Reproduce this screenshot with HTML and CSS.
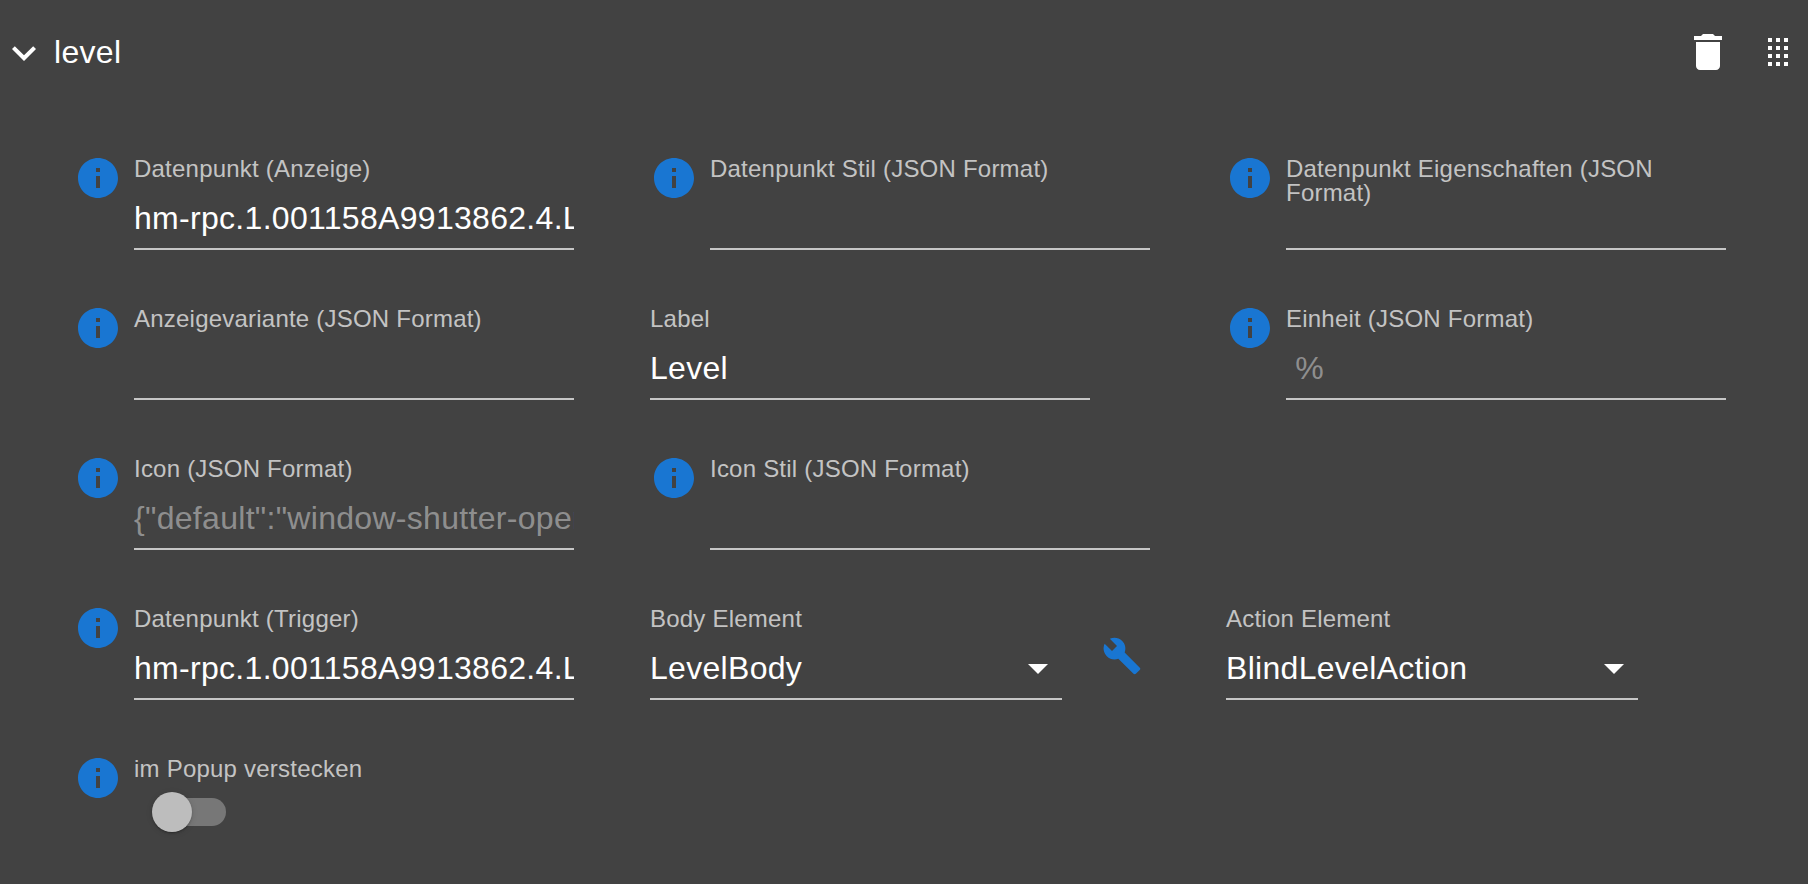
FILE: index.html
```html
<!DOCTYPE html>
<html lang="de">
<head>
  <meta charset="UTF-8">
  <meta name="viewport" content="width=device-width, initial-scale=1.0">
  <title>level</title>
  <link rel="stylesheet" href="styles.css">
</head>
<body>
  <svg class="icon-defs" aria-hidden="true">
    <symbol id="info" viewBox="0 0 24 24">
      <path d="M12 2C6.48 2 2 6.48 2 12s4.48 10 10 10 10-4.48 10-10S17.52 2 12 2zm1 15h-2v-6h2v6zm0-8h-2V7h2v2z"/>
    </symbol>
    <symbol id="arrow" viewBox="0 0 24 24">
      <path d="M7 10l5 5 5-5z"/>
    </symbol>
  </svg>

  <div class="header">
    <svg class="chevron" viewBox="0 0 24 24"><path d="M16.59 8.59L12 13.17 7.41 8.59 6 10l6 6 6-6z"/></svg>
    <span class="title">level</span>
    <svg class="trash" viewBox="0 0 24 24"><path d="M6 19c0 1.1.9 2 2 2h8c1.1 0 2-.9 2-2V7H6v12zM19 4h-3.5l-1-1h-5l-1 1H5v2h14V4z"/></svg>
    <svg class="dots" viewBox="0 0 20 28">
      <rect x="0" y="0" width="4" height="4"/><rect x="8" y="0" width="4" height="4"/><rect x="16" y="0" width="4" height="4"/>
      <rect x="0" y="8" width="4" height="4"/><rect x="8" y="8" width="4" height="4"/><rect x="16" y="8" width="4" height="4"/>
      <rect x="0" y="16" width="4" height="4"/><rect x="8" y="16" width="4" height="4"/><rect x="16" y="16" width="4" height="4"/>
      <rect x="0" y="24" width="4" height="4"/><rect x="8" y="24" width="4" height="4"/><rect x="16" y="24" width="4" height="4"/>
    </svg>
  </div>

  <div class="form-grid">
    <div class="cell">
      <svg class="info"><use href="#info"/></svg>
      <div class="field">
        <label class="field-label">Datenpunkt (Anzeige)</label>
        <input class="field-input" type="text" value="hm-rpc.1.001158A9913862.4.LEVEL">
      </div>
    </div>
    <div class="cell">
      <svg class="info"><use href="#info"/></svg>
      <div class="field">
        <label class="field-label">Datenpunkt Stil (JSON Format)</label>
        <input class="field-input" type="text">
      </div>
    </div>
    <div class="cell">
      <svg class="info"><use href="#info"/></svg>
      <div class="field">
        <label class="field-label">Datenpunkt Eigenschaften (JSON Format)</label>
        <input class="field-input" type="text">
      </div>
    </div>

    <div class="cell">
      <svg class="info"><use href="#info"/></svg>
      <div class="field">
        <label class="field-label">Anzeigevariante (JSON Format)</label>
        <input class="field-input" type="text">
      </div>
    </div>
    <div class="cell">
      <div class="field">
        <label class="field-label">Label</label>
        <input class="field-input" type="text" value="Level">
      </div>
    </div>
    <div class="cell">
      <svg class="info"><use href="#info"/></svg>
      <div class="field">
        <label class="field-label">Einheit (JSON Format)</label>
        <input class="field-input" type="text" placeholder=" %">
      </div>
    </div>

    <div class="cell">
      <svg class="info"><use href="#info"/></svg>
      <div class="field">
        <label class="field-label">Icon (JSON Format)</label>
        <input class="field-input" type="text" placeholder='{"default":"window-shutter-open"}'>
      </div>
    </div>
    <div class="cell">
      <svg class="info"><use href="#info"/></svg>
      <div class="field">
        <label class="field-label">Icon Stil (JSON Format)</label>
        <input class="field-input" type="text">
      </div>
    </div>

    <div class="cell row-start">
      <svg class="info"><use href="#info"/></svg>
      <div class="field">
        <label class="field-label">Datenpunkt (Trigger)</label>
        <input class="field-input" type="text" value="hm-rpc.1.001158A9913862.4.LEVEL">
      </div>
    </div>
    <div class="cell">
      <div class="field field-select">
        <label class="field-label">Body Element</label>
        <div class="select">
          <span>LevelBody</span>
          <svg class="select-arrow"><use href="#arrow"/></svg>
        </div>
      </div>
      <svg class="wrench" viewBox="0 0 24 24"><path d="M22.7 19l-9.1-9.1c.9-2.3.4-5-1.5-6.9-2-2-5-2.4-7.4-1.3L9 6 6 9 1.6 4.7C.4 7.1.9 10.1 2.9 12.1c1.9 1.9 4.6 2.4 6.9 1.5l9.1 9.1c.4.4 1 .4 1.4 0l2.3-2.3c.5-.4.5-1.1.1-1.4z"/></svg>
    </div>
    <div class="cell">
      <div class="field field-select">
        <label class="field-label">Action Element</label>
        <div class="select">
          <span>BlindLevelAction</span>
          <svg class="select-arrow"><use href="#arrow"/></svg>
        </div>
      </div>
    </div>

    <div class="cell row-start">
      <svg class="info"><use href="#info"/></svg>
      <div class="field">
        <label class="field-label">im Popup verstecken</label>
        <div class="switch">
          <div class="switch-track"></div>
          <div class="switch-thumb"></div>
        </div>
      </div>
    </div>
  </div>
</body>
</html>
```

FILE: styles.css
```css
* {
  box-sizing: border-box;
}

html, body {
  height: 100%;
}

body {
  margin: 0;
  background: #424242;
  color: #fff;
  font-family: "Liberation Sans", Arial, sans-serif;
  overflow: hidden;
}

.icon-defs {
  display: none;
}

.header {
  display: flex;
  align-items: center;
  height: 48px;
  margin-top: 28px;
  padding-right: 20px;
}

.chevron {
  width: 48px;
  height: 48px;
  margin-top: 2px;
  fill: #fff;
}

.title {
  margin-left: 6px;
  font-size: 32px;
  letter-spacing: 0.3px;
}

.trash {
  width: 48px;
  height: 48px;
  margin-left: auto;
  fill: #fff;
}

.dots {
  width: 20px;
  height: 28px;
  margin-left: 36px;
  fill: #fff;
}

.form-grid {
  display: grid;
  grid-template-columns: repeat(3, 576px);
  grid-auto-rows: 150px;
  margin-top: 78px;
  padding-left: 74px;
}

.cell {
  display: flex;
  align-items: flex-start;
}

.row-start {
  grid-column: 1;
}

.info {
  flex: none;
  width: 48px;
  height: 48px;
  margin-right: 12px;
  fill: #1976d2;
}

.field {
  display: flex;
  flex-direction: column;
  justify-content: space-between;
  width: 440px;
  height: 96px;
}

.field-select {
  width: 412px;
}

/* fixed height, a second line of text runs over the input like in the original */
.field-label {
  height: 44px;
  padding-top: 3px;
  font-size: 24px;
  line-height: 24px;
  letter-spacing: 0.22px;
  color: rgba(255,255,255,0.7);
}

.field-input {
  display: block;
  width: 100%;
  height: 52px;
  padding: 0 0 10px;
  border: none;
  border-bottom: 2px solid rgba(255,255,255,0.7);
  background: transparent;
  color: #fff;
  font-family: inherit;
  font-size: 32px;
  letter-spacing: 0.3px;
  outline: none;
}

.field-input::placeholder {
  color: rgba(255,255,255,0.42);
  opacity: 1;
}

.select {
  display: flex;
  justify-content: space-between;
  width: 100%;
  height: 52px;
  padding: 1px 0 11px;
  border-bottom: 2px solid rgba(255,255,255,0.7);
  font-size: 32px;
  line-height: 38px;
  letter-spacing: 0.3px;
}

.select-arrow {
  flex: none;
  width: 48px;
  height: 48px;
  margin-top: -5px;
  fill: #fff;
}

.wrench {
  width: 40px;
  height: 40px;
  margin: 32px 0 0 40px;
  fill: #1976d2;
}

.switch {
  position: relative;
  flex: none;
  width: 74px;
  height: 40px;
  margin: -6px 0 auto 18px;
}

.switch-track {
  width: 68px;
  height: 28px;
  margin: 6px 0 0 6px;
  border-radius: 14px;
  background: #777;
}

.switch-thumb {
  position: absolute;
  top: 0;
  left: 0;
  width: 40px;
  height: 40px;
  border-radius: 50%;
  background: #bdbdbd;
  box-shadow: 0 2px 2px -1px rgba(0,0,0,0.2), 0 1px 2px 0 rgba(0,0,0,0.14), 0 1px 6px 0 rgba(0,0,0,0.12);
}
```
